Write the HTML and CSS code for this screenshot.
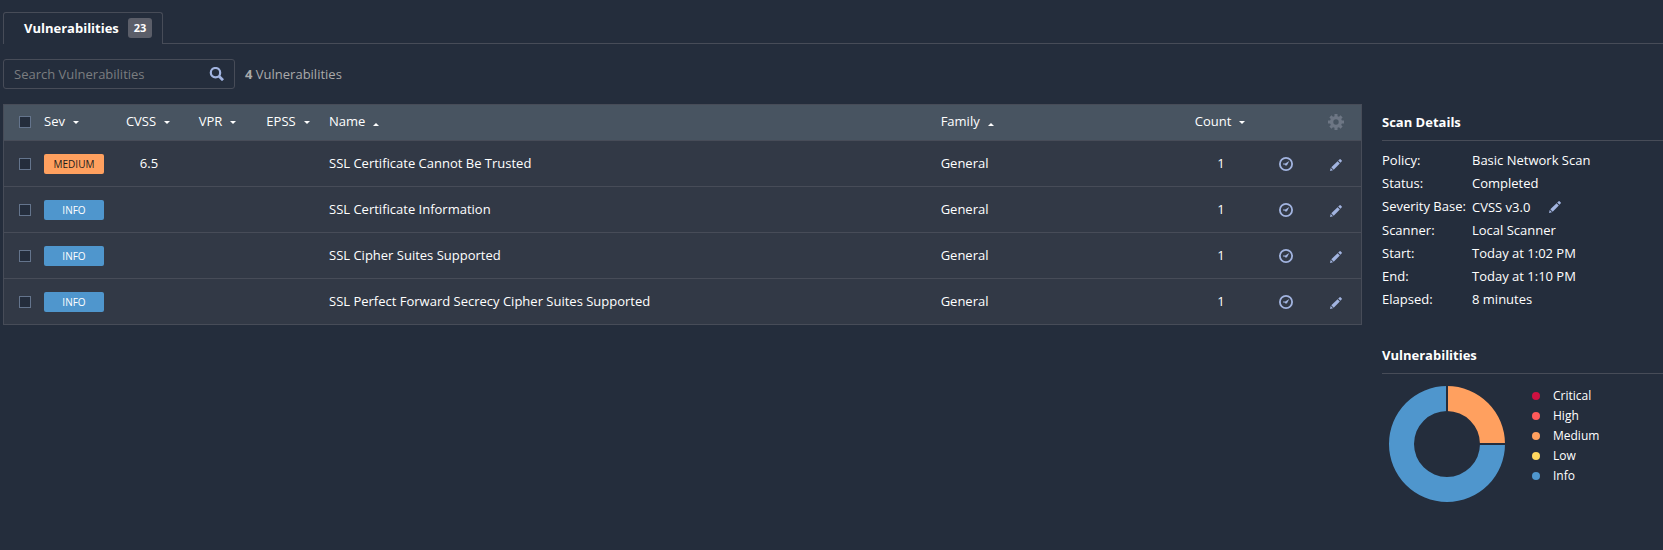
FILE: index.html
```html
<!DOCTYPE html>
<html lang="en">
<head>
<meta charset="utf-8">
<title>Vulnerabilities</title>
<link rel="stylesheet" href="styles.css">
</head>
<body>
<svg class="defs" width="0" height="0" aria-hidden="true">
  <symbol id="pencil" viewBox="0 0 12 12">
    <path d="M0 12l.7-3 2.300 2.300zM1.300 8.300L7.600 2.200l2.200 2.200L3.700 10.700zM8.200 1.600L9.700.2q.4-.3.800 0l1.300 1.300q.3.400 0 .8l-1.400 1.500z"/>
  </symbol>
  <symbol id="gauge" viewBox="0 0 14 14">
    <circle cx="7" cy="7" r="6.100" fill="none" stroke="currentColor" stroke-width="1.800"/>
    <path d="M4 6.600h2.200L10.300 4 8 8.200q-.9.800-1.900 0L5.500 7.600H4z"/>
  </symbol>
</svg>
<nav class="tabs">
  <a class="tab" href="#vulnerabilities">Vulnerabilities <span class="badge">23</span></a>
</nav>
<form class="filter" role="search">
  <div class="search">
    <input type="text" class="search-input" placeholder="Search Vulnerabilities" aria-label="Search Vulnerabilities">
    <button type="button" class="icon-button" aria-label="Search">
      <svg width="15" height="14" viewBox="0 0 15 14"><circle cx="6.500" cy="5.700" r="4.700" fill="none" stroke="currentColor" stroke-width="2.200"/><path d="M9.800 9l4.200 4.200" fill="none" stroke="currentColor" stroke-width="2.800"/></svg>
    </button>
  </div>
  <p class="total"><b>4</b> Vulnerabilities</p>
</form>
<div class="content">
  <main class="main" id="vulnerabilities">
    <table class="grid">
      <colgroup>
        <col class="c-check"><col class="c-sev"><col class="c-cvss"><col class="c-vpr"><col class="c-epss"><col class="c-name"><col class="c-family"><col class="c-count"><col class="c-action"><col class="c-action">
      </colgroup>
      <thead>
        <tr>
          <th class="center value"><input type="checkbox" class="check" aria-label="Select all"></th>
          <th><button type="button" class="sort down">Sev</button></th>
          <th class="center"><button type="button" class="sort down">CVSS</button></th>
          <th class="center"><button type="button" class="sort down">VPR</button></th>
          <th class="center"><button type="button" class="sort down">EPSS</button></th>
          <th class="name"><button type="button" class="sort up">Name</button></th>
          <th class="family"><button type="button" class="sort up">Family</button></th>
          <th class="center"><button type="button" class="sort down">Count</button></th>
          <th></th>
          <th class="center"><button type="button" class="icon-button gear" aria-label="Settings">
            <svg width="16" height="16" viewBox="-8 -8 16 16"><circle r="4.400" fill="none" stroke="currentColor" stroke-width="3.400"/><path d="M0-8V-5M0 8V5M-8 0H-5M8 0H5M-5.600-5.600L-3.600-3.600M5.600 5.600L3.600 3.600M-5.600 5.600L-3.600 3.600M5.600-5.600L3.600-3.600" stroke="currentColor" stroke-width="3"/></svg>
          </button></th>
        </tr>
      </thead>
      <tbody>
        <tr>
          <td class="center value"><input type="checkbox" class="check" aria-label="Select SSL Certificate Cannot Be Trusted"></td>
          <td class="severity"><span class="sev medium">MEDIUM</span></td>
          <td class="center value">6.5</td><td></td><td></td>
          <td class="name">SSL Certificate Cannot Be Trusted</td>
          <td class="family">General</td>
          <td class="center value">1</td>
          <td class="center"><button type="button" class="icon-button" aria-label="Snooze"><svg width="14" height="14"><use href="#gauge"/></svg></button></td>
          <td class="center"><button type="button" class="icon-button edit" aria-label="Edit"><svg width="12" height="12"><use href="#pencil"/></svg></button></td>
        </tr>
        <tr>
          <td class="center value"><input type="checkbox" class="check" aria-label="Select SSL Certificate Information"></td>
          <td class="severity"><span class="sev info">INFO</span></td>
          <td></td><td></td><td></td>
          <td class="name">SSL Certificate Information</td>
          <td class="family">General</td>
          <td class="center value">1</td>
          <td class="center"><button type="button" class="icon-button" aria-label="Snooze"><svg width="14" height="14"><use href="#gauge"/></svg></button></td>
          <td class="center"><button type="button" class="icon-button edit" aria-label="Edit"><svg width="12" height="12"><use href="#pencil"/></svg></button></td>
        </tr>
        <tr>
          <td class="center value"><input type="checkbox" class="check" aria-label="Select SSL Cipher Suites Supported"></td>
          <td class="severity"><span class="sev info">INFO</span></td>
          <td></td><td></td><td></td>
          <td class="name">SSL Cipher Suites Supported</td>
          <td class="family">General</td>
          <td class="center value">1</td>
          <td class="center"><button type="button" class="icon-button" aria-label="Snooze"><svg width="14" height="14"><use href="#gauge"/></svg></button></td>
          <td class="center"><button type="button" class="icon-button edit" aria-label="Edit"><svg width="12" height="12"><use href="#pencil"/></svg></button></td>
        </tr>
        <tr>
          <td class="center value"><input type="checkbox" class="check" aria-label="Select SSL Perfect Forward Secrecy Cipher Suites Supported"></td>
          <td class="severity"><span class="sev info">INFO</span></td>
          <td></td><td></td><td></td>
          <td class="name">SSL Perfect Forward Secrecy Cipher Suites Supported</td>
          <td class="family">General</td>
          <td class="center value">1</td>
          <td class="center"><button type="button" class="icon-button" aria-label="Snooze"><svg width="14" height="14"><use href="#gauge"/></svg></button></td>
          <td class="center"><button type="button" class="icon-button edit" aria-label="Edit"><svg width="12" height="12"><use href="#pencil"/></svg></button></td>
        </tr>
      </tbody>
    </table>
  </main>
  <aside class="side">
    <section>
      <h2 class="heading">Scan Details</h2>
      <dl class="details">
        <dt>Policy:</dt><dd>Basic Network Scan</dd>
        <dt>Status:</dt><dd>Completed</dd>
        <dt>Severity Base:</dt><dd class="with-edit">CVSS v3.0 <button type="button" class="icon-button" aria-label="Edit severity base"><svg width="12" height="12"><use href="#pencil"/></svg></button></dd>
        <dt>Scanner:</dt><dd>Local Scanner</dd>
        <dt>Start:</dt><dd>Today at 1:02 PM</dd>
        <dt>End:</dt><dd>Today at 1:10 PM</dd>
        <dt>Elapsed:</dt><dd>8 minutes</dd>
      </dl>
    </section>
    <section>
      <h2 class="heading">Vulnerabilities</h2>
      <div class="chart">
        <svg width="116" height="116" viewBox="-58 -58 116 116" role="img" aria-label="Medium 25%, Info 75%">
          <path class="slice-info" d="M0-58A58 58 0 1 0 58 0H33A33 33 0 1 1 0-33z"/>
          <path class="slice-medium" d="M0-58A58 58 0 0 1 58 0H33A33 33 0 0 0 0-33z"/>
          <path class="gap" d="M0-58V-32M32 0H58"/>
        </svg>
        <ul class="legend">
          <li class="critical">Critical</li>
          <li class="high">High</li>
          <li class="med">Medium</li>
          <li class="low">Low</li>
          <li class="inf">Info</li>
        </ul>
      </div>
    </section>
  </aside>
</div>
</body>
</html>
```
FILE: styles.css
```css
:root {
  --bg: #242d3c;
  --line: #474c58;
  --accent: #a2b4e0;
  --medium: #ffa05f;
  --info: #4f96cd;
}
* { box-sizing: border-box; }
body {
  margin: 0;
  padding-top: 12px;
  background: var(--bg);
  color: #fff;
  font: 13px/18px "Open Sans", "Noto Sans", sans-serif;
}
button, input { font: inherit; color: inherit; }
svg { display: block; fill: currentColor; }
.defs { position: absolute; }
.icon-button {
  display: inline-block;
  vertical-align: middle;
  padding: 0;
  border: 0;
  background: none;
  color: var(--accent);
}

.tabs {
  display: flex;
  padding-left: 3px;
}
.tabs::after {
  content: "";
  flex: 1;
  border-bottom: 1px solid var(--line);
}
.tab {
  display: flex;
  align-items: center;
  gap: 9px;
  height: 32px;
  padding: 0 10px 2px 20px;
  border: 1px solid var(--line);
  border-bottom: 0;
  border-radius: 3px 3px 0 0;
  color: #fff;
  font-weight: 700;
  text-decoration: none;
}
.badge {
  padding: 1px 6px;
  border-radius: 3px;
  background: #5b5e69;
  font-size: 11px;
}

.filter {
  display: flex;
  align-items: center;
  gap: 10px;
  padding: 15px 3px;
}
.search {
  display: flex;
  align-items: center;
  width: 232px;
  height: 30px;
  padding: 0 10px;
  border: 1px solid var(--line);
  border-radius: 3px;
}
.search-input {
  flex: 1;
  min-width: 0;
  padding: 0;
  border: 0;
  outline: 0;
  background: none;
}
.search-input::placeholder { color: #7b7d80; opacity: 1; }
.total { margin: 0; color: #aaa; }

.content {
  display: flex;
  align-items: flex-start;
  gap: 20px;
  padding-left: 3px;
}
.main { flex: 1; min-width: 0; }
.grid {
  width: 100%;
  table-layout: fixed;
  border-collapse: separate;
  border-spacing: 0;
  border: 1px solid var(--line);
  border-bottom: 0;
  background: #323946;
}
.c-check { width: 40px; }
.c-sev { width: 68px; }
.c-cvss { width: 72px; }
.c-vpr { width: 67px; }
.c-epss { width: 74px; }
.c-name { width: 45%; }
.c-count { width: 82px; }
.c-action { width: 50px; }
.grid th, .grid td {
  height: 46px;
  padding: 0 0 2px;
  border-bottom: 1px solid var(--line);
  text-align: left;
  font-weight: 400;
}
.grid th { height: 36px; padding-bottom: 4px; background: #485461; }
.grid .severity { padding: 0; }
.grid .center { text-align: center; }
.grid .value { padding-left: 2px; }
.grid .name { padding-left: 4px; }
.grid .family { padding-left: 5px; }
.check {
  appearance: none;
  display: inline-block;
  vertical-align: middle;
  width: 12px;
  height: 12px;
  margin: 0;
  border: 1px solid #64748c;
  background: var(--bg);
}
.sort {
  display: inline-flex;
  align-items: center;
  gap: 8px;
  padding: 0;
  border: 0;
  background: none;
}
.sort::after {
  content: "";
  border: 3px solid transparent;
}
.down::after { border-top-color: #fff; border-bottom: 0; margin-top: 3px; }
.up::after { border-bottom-color: #fff; border-top: 0; margin-top: 7px; }
.gear { color: #6d7684; }
.edit { padding-top: 2px; }
.sev {
  display: block;
  width: 60px;
  border-radius: 2px;
  font-size: 10px;
  line-height: 20px;
  text-align: center;
}
.medium { background: var(--medium); color: #1c1c1c; }
.info { background: var(--info); }

.side { width: 281px; }
.heading {
  margin: 0;
  padding: 9px 0;
  border-bottom: 1px solid var(--line);
  font-size: 13px;
  line-height: 18px;
}
.details {
  display: grid;
  grid-template-columns: 90px 1fr;
  row-gap: 5px;
  margin: 10px 0 29px;
}
.details dt { white-space: nowrap; }
.details dd { margin: 0; }
.details .with-edit {
  display: flex;
  align-items: center;
  gap: 19px;
  padding-top: 1px;
}
.chart {
  display: flex;
  align-items: flex-start;
  gap: 27px;
  padding: 12px 7px;
}
.slice-info { fill: var(--info); }
.slice-medium { fill: var(--medium); }
.gap { stroke: var(--bg); stroke-width: 2; }
.legend {
  margin: 0;
  padding: 0;
  list-style: none;
  font-size: 12px;
  line-height: 20px;
}
.legend li { display: flex; align-items: center; gap: 13px; }
.legend li::before {
  content: "";
  width: 8px;
  height: 8px;
  border-radius: 50%;
  background: currentColor;
}
.critical::before { color: #ce1141; }
.high::before { color: #ff5a5a; }
.med::before { color: var(--medium); }
.low::before { color: #ffd75f; }
.inf::before { color: var(--info); }
```
